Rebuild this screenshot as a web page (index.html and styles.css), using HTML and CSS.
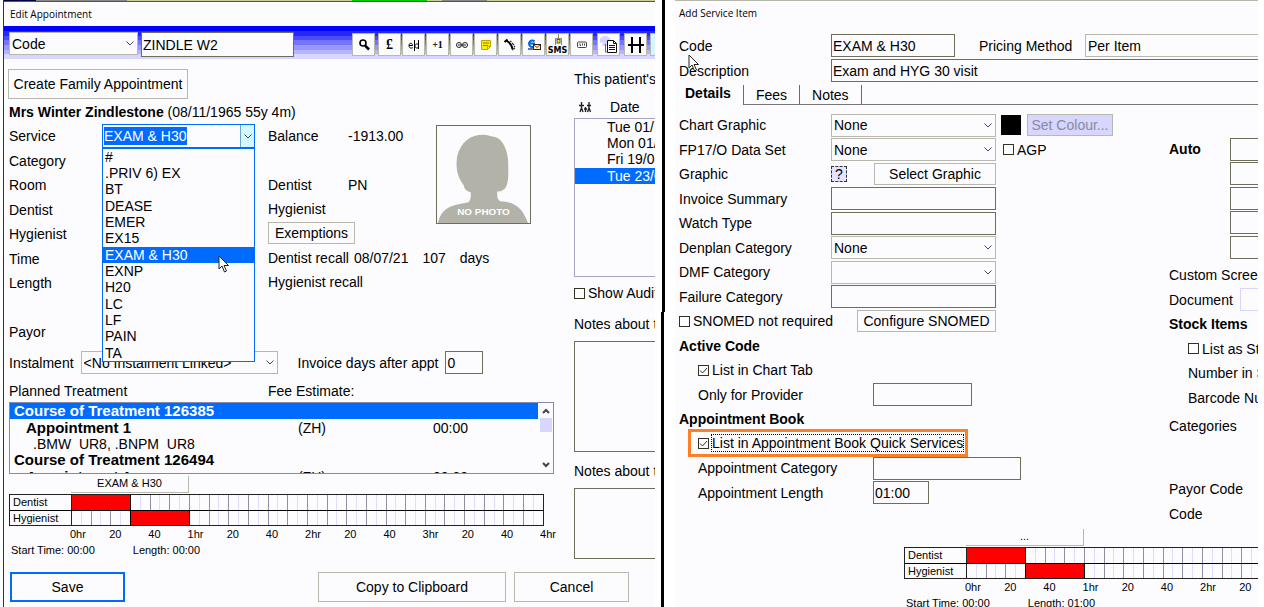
FILE: index.html
```html
<!DOCTYPE html>
<html lang="en">
<head>
    <meta charset="UTF-8">
    <meta name="viewport" content="width=device-width, initial-scale=1.0">
    <title>Edit Appointment</title>
    <link rel="stylesheet" href="styles.css">
</head>
<body>
    <main class="screens">
        <!-- Edit Appointment -->
        <section class="pane appointment">
            <div class="book-strip"></div>
            <h1 class="title">Edit Appointment</h1>

            <div class="toolbar">
                <select class="field select search-by" aria-label="Search by"><option>Code</option></select>
                <input class="field search-text" type="text" value="ZINDLE W2" aria-label="Search text">
                <div class="tools">
                    <button class="tool" aria-label="Find"><svg viewBox="0 0 16 16"><circle cx="7" cy="6" r="3" fill="none" stroke="#000" stroke-width="1.600"/><path d="M9 8.500l4 4" stroke="#000" stroke-width="2.500"/></svg></button>
                    <button class="tool spaced pound">£</button>
                    <button class="tool" aria-label="Edit"><svg viewBox="0 0 16 16"><path d="M3 8.500h3.500c0-3-3.500-3-3.500 0s2.500 3 4 2M8.500 3v11M12.500 3v9M12.500 8c-1-2-3.500-1-3.500 1s2.500 3 3.500 1" fill="none" stroke="#000"/></svg></button>
                    <button class="tool plus-one">+1</button>
                    <button class="tool" aria-label="Link"><svg viewBox="0 0 16 16"><path d="M5 5.500a2.500 2.500 0 1 0 0 5 2.500 2.500 0 1 0 0-5M11 5.500a2.500 2.500 0 1 0 0 5 2.500 2.500 0 1 0 0-5" fill="none" stroke="#222"/><path d="M4 8h3M9 8h3" stroke="#222"/></svg></button>
                    <button class="tool" aria-label="Note"><svg viewBox="0 0 16 16"><path d="M3.500 3.500h9v6l-3 3h-6z" fill="#ffee00" stroke="#b8a800"/><path d="M5 6h6M5 8.500h5" stroke="#8a7d00"/><path d="M9.500 12.500v-3h3z" fill="#fff8a0" stroke="#b8a800"/></svg></button>
                    <button class="tool" aria-label="Phone"><svg viewBox="0 0 16 16"><path d="M2.500 5l3-2.500M5 4c3 2 5 5 5.500 8" fill="none" stroke="#000" stroke-width="2"/><path d="M10 13l3-2M8 4l1.500 1M10 6l2 2M12 9l1 1" stroke="#333" stroke-width="1.200"/></svg></button>
                    <button class="tool" aria-label="Email"><svg viewBox="0 0 16 16"><path d="M8.500 4.500A3.200 3.200 0 1 0 8.500 9M3 6.500h6" fill="none" stroke="#0066dd" stroke-width="2"/><rect x="7.500" y="7.500" width="7" height="5" fill="#ffe9a0" stroke="#222"/><path d="M8 8l3 2.500L14 8" fill="none" stroke="#b33"/><path d="M2 12h6" stroke="#2244aa" stroke-width="1.500"/></svg></button>
                    <button class="tool sms"><svg viewBox="0 0 16 12"><path d="M5.500 11V4.500h6V11M8.500 4V0" fill="none" stroke="#8a8a6a"/><rect x="7" y="5.500" width="3" height="3.500" fill="#ffee00" stroke="#555"/></svg><span>SMS</span></button>
                    <button class="tool" aria-label="Card"><svg viewBox="0 0 16 16"><rect x="3.500" y="5" width="9" height="5.500" rx="1" fill="#fff" stroke="#444"/><path d="M6 6.500v2h1M8.500 6.500v2M10.500 6.500v2" fill="none" stroke="#444"/></svg></button>
                    <button class="tool wide" aria-label="New document"><svg viewBox="0 0 20 20"><path d="M1 5h10M6 1v10" stroke="#d4d4ff" stroke-width="5"/><path d="M8.500 5.500h6l3 3v9h-9z" fill="#fff" stroke="#111"/><path d="M14.500 5.500v3h3M10 10.500h6M10 12.500h6M10 14.500h6" fill="none" stroke="#111"/><path d="M6.500 9v8h2" fill="none" stroke="#666"/></svg></button>
                    <button class="tool wide" aria-label="Chart"><svg viewBox="0 0 20 20"><path d="M6 2v16M14 2v16M2 10h16" stroke="#000" stroke-width="2"/></svg></button>
                    <button class="tool spaced clipped" aria-label="More"></button>
                </div>
            </div>

            <div class="appointment-body">
                <div class="main-column">
                    <button class="button family">Create Family Appointment</button>
                    <p class="patient"><b>Mrs Winter Zindlestone</b> (08/11/1965 55y 4m)</p>

                    <div class="details">
                        <div class="rows">
                            <label for="service">Service</label>
                            <span>Category</span>
                            <span>Room</span>
                            <span>Dentist</span>
                            <span>Hygienist</span>
                            <span>Time</span>
                            <span>Length</span>
                            <span></span>
                            <span>Payor</span>
                        </div>
                        <div class="combo">
                            <div class="combo-box">
                                <input id="service" type="text" value="EXAM &amp; H30">
                                <button class="combo-arrow" aria-label="Show services"></button>
                            </div>
                            <ul class="combo-list">
                                <li>#</li>
                                <li>.PRIV 6) EX</li>
                                <li>BT</li>
                                <li>DEASE</li>
                                <li>EMER</li>
                                <li>EX15</li>
                                <li class="selected">EXAM &amp; H30
                                    <svg class="cursor" viewBox="0 0 12 18"><path d="M1 1v13l3-3 2.500 6 2-1-2.500-5.500h4.500z" fill="#fff" stroke="#222"/></svg>
                                </li>
                                <li>EXNP</li>
                                <li>H20</li>
                                <li>LC</li>
                                <li>LF</li>
                                <li>PAIN</li>
                                <li>TA</li>
                            </ul>
                        </div>
                        <div class="rows account">
                            <div class="pair"><span>Balance</span><span>-1913.00</span></div>
                            <span></span>
                            <div class="pair"><span>Dentist</span><span>PN</span></div>
                            <span>Hygienist</span>
                            <div><button class="button small">Exemptions</button></div>
                            <div class="recall"><span>Dentist recall</span><span>08/07/21</span><span>107</span><span>days</span></div>
                            <span>Hygienist recall</span>
                        </div>
                        <div class="photo">
                            <svg viewBox="0 0 94 98">
                                <path d="M1 98C5 80 18 80 32 77Q35 74 34 67Q28 66 27 60C21 52 19 44 20 34C22 18 33 9 44 9C50 8 54 11 59 11C68 14 72 27 72 38C72 46 73 57 69 63Q65 67 61 66Q60 74 64 76C79 77 86 82 92 98z" fill="#b2b2a8"/>
                                <text x="47" y="90" text-anchor="middle">NO PHOTO</text>
                            </svg>
                        </div>
                    </div>

                    <div class="instalment">
                        <label for="instalment">Instalment</label>
                        <select class="field select" id="instalment"><option>&lt;No Instalment Linked&gt;</option></select>
                        <label for="invoice-days">Invoice days after appt</label>
                        <input class="field days" id="invoice-days" type="text" value="0">
                    </div>

                    <div class="treatment-head"><span>Planned Treatment</span><span>Fee Estimate:</span></div>
                    <div class="treatment">
                        <table>
                            <colgroup>
                                <col class="col-name">
                                <col class="col-provider">
                                <col>
                            </colgroup>
                            <tr class="selected"><th colspan="3">Course of Treatment 126385</th></tr>
                            <tr><th class="level-1">Appointment 1</th><td>(ZH)</td><td>00:00</td></tr>
                            <tr><td class="level-2" colspan="3">.BMW&nbsp; UR8, .BNPM&nbsp; UR8</td></tr>
                            <tr><th colspan="3">Course of Treatment 126494</th></tr>
                            <tr><th class="level-1">Appointment 1</th><td>(ZH)</td><td>00:00</td></tr>
                        </table>
                        <div class="scrollbar">
                            <svg viewBox="0 0 8 6"><path d="M1 5l3-3 3 3" fill="none" stroke="#444" stroke-width="2"/></svg>
                            <div class="thumb"></div>
                            <svg viewBox="0 0 8 6"><path d="M1 1l3 3 3-3" fill="none" stroke="#444" stroke-width="2"/></svg>
                        </div>
                    </div>

                    <div class="timeline" data-caption="EXAM &amp; H30" data-length="00:00"></div>
                </div>

                <div class="side-column">
                    <p class="side-title">This patient's appointments</p>
                    <div class="date-head">
                        <svg viewBox="0 0 12 12"><path d="M2.500 1v6M0 4.500h5M1 11l1.500-4 1.500 4M6.500 6v5M5 8h3M10 1v6M8 4.500h4M8.500 11L10 7l1.500 4" fill="none" stroke="#222" stroke-width="1.400"/></svg>
                        <span>Date</span>
                    </div>
                    <ul class="dates">
                        <li>Tue 01/12/20</li>
                        <li>Mon 01/02/21</li>
                        <li>Fri 19/03/21</li>
                        <li class="selected">Tue 23/03/21</li>
                    </ul>
                    <label class="check audit"><input type="checkbox">Show Audit</label>
                    <label class="notes-label" for="notes-patient">Notes about the patient</label>
                    <textarea class="notes tall" id="notes-patient"></textarea>
                    <label class="notes-label" for="notes-appointment">Notes about this visit</label>
                    <textarea class="notes" id="notes-appointment"></textarea>
                </div>
            </div>

            <div class="actions">
                <button class="button save">Save</button>
                <button class="button copy">Copy to Clipboard</button>
                <button class="button cancel">Cancel</button>
            </div>
        </section>

        <div class="divider"></div>

        <!-- Add Service Item -->
        <section class="pane service">
            <h1 class="title">Add Service Item</h1>

            <div class="item-head">
                <label for="code">Code</label>
                <input class="field" id="code" type="text" value="EXAM &amp; H30">
                <label for="pricing">Pricing Method</label>
                <select class="field pricing" id="pricing"><option>Per Item</option></select>
                <label for="description">Description
                    <svg class="cursor" viewBox="0 0 12 18"><path d="M1 1v13l3-3 2.500 6 2-1-2.500-5.500h4.500z" fill="#fff" stroke="#222"/></svg>
                </label>
                <input class="field description" id="description" type="text" value="Exam and HYG 30 visit">
            </div>

            <nav class="tabs">
                <a class="tab active" href="#details">Details</a>
                <a class="tab" href="#fees">Fees</a>
                <a class="tab" href="#notes">Notes</a>
                <span class="tab-fill"></span>
            </nav>

            <div class="item-body">
                <div class="rows item-rows">
                    <div class="row">
                        <label for="chart-graphic">Chart Graphic</label>
                        <select class="field select" id="chart-graphic"><option>None</option></select>
                        <span class="swatch"></span>
                        <button class="button small" disabled>Set Colour...</button>
                    </div>
                    <div class="row">
                        <label for="data-set">FP17/O Data Set</label>
                        <select class="field select" id="data-set"><option>None</option></select>
                        <label class="check agp"><input type="checkbox">AGP</label>
                    </div>
                    <div class="row">
                        <span>Graphic</span>
                        <div class="graphic">
                            <span class="placeholder">?</span>
                            <button class="button small">Select Graphic</button>
                        </div>
                    </div>
                    <div class="row"><label for="summary">Invoice Summary</label><input class="field" id="summary" type="text"></div>
                    <div class="row"><label for="watch">Watch Type</label><input class="field" id="watch" type="text"></div>
                    <div class="row"><label for="denplan">Denplan Category</label><select class="field select" id="denplan"><option>None</option></select></div>
                    <div class="row"><label for="dmf">DMF Category</label><select class="field select" id="dmf"><option></option></select></div>
                    <div class="row"><label for="failure">Failure Category</label><input class="field" id="failure" type="text"></div>
                    <div class="snomed">
                        <label class="check"><input type="checkbox">SNOMED not required</label>
                        <button class="button small">Configure SNOMED</button>
                    </div>
                    <h2>Active Code</h2>
                    <label class="check indent"><input type="checkbox" checked>List in Chart Tab</label>
                    <div class="row indent"><label for="provider">Only for Provider</label><input class="field provider" id="provider" type="text"></div>
                    <h2>Appointment Book</h2>
                    <div class="indent">
                        <label class="check highlight"><input type="checkbox" checked><span>List in Appointment Book Quick Services</span></label>
                    </div>
                    <div class="row indent"><label for="category">Appointment Category</label><input class="field category" id="category" type="text"></div>
                    <div class="row indent"><label for="length">Appointment Length</label><input class="field length" id="length" type="text" value="01:00"></div>
                </div>

                <div class="stock-column">
                    <div class="rows auto">
                        <div class="auto-row"><b>Auto</b><input class="field" type="text" aria-label="Auto 1"></div>
                        <div class="auto-row"><input class="field" type="text" aria-label="Auto 2"></div>
                        <div class="auto-row"><input class="field" type="text" aria-label="Auto 3"></div>
                        <div class="auto-row"><input class="field" type="text" aria-label="Auto 4"></div>
                        <div class="auto-row"><input class="field" type="text" aria-label="Auto 5"></div>
                    </div>
                    <div class="rows">
                        <span>Custom Screen</span>
                        <div class="document"><label for="document">Document</label><input class="field" id="document" type="text" disabled></div>
                        <h2>Stock Items</h2>
                        <label class="check indent"><input type="checkbox">List as Stock</label>
                        <span class="indent">Number in Stock</span>
                        <span class="indent">Barcode Number</span>
                    </div>
                    <div class="rows categories"><span>Categories</span></div>
                    <div class="rows payor">
                        <span>Payor Code</span>
                        <span>Code</span>
                    </div>
                </div>
            </div>

            <div class="timeline item-timeline" data-caption="..." data-length="01:00"></div>
        </section>
    </main>

    <script>
        const HOURS = 4;
        const SLOTS = HOURS * 12; // one slot is five minutes

        // Slots between from and to are booked
        function renderTrack(name, from, to) {
            let slots = '';
            for (let i = 0; i < SLOTS; i++) {
                const classes = ['slot'];
                if (i % 2 === 1) classes.push('ten');
                if (i >= from && i < to) classes.push('booked');
                if (i === from - 1 || i === to - 1) classes.push('edge');
                slots += `<span class="${classes.join(' ')}"></span>`;
            }
            return `<div class="track"><span class="track-name">${name}</span><div class="slots">${slots}</div></div>`;
        }

        function renderScale() {
            let marks = '';
            for (let hour = 0; hour < HOURS; hour++) {
                marks += `<span>${hour}hr</span><span>20</span><span>40</span>`;
            }
            return `<div class="scale">${marks}<span class="last">${HOURS}hr</span></div>`;
        }

        document.querySelectorAll('.timeline').forEach(timeline => {
            timeline.innerHTML = `
                <div class="caption">${timeline.dataset.caption.replace('&', '&amp;')}</div>
                <div class="tracks">
                    ${renderTrack('Dentist', 0, 6)}
                    ${renderTrack('Hygienist', 6, 12)}
                </div>
                ${renderScale()}
                <div class="times"><span>Start Time: 00:00</span><span>Length: ${timeline.dataset.length}</span></div>
            `;
        });
    </script>
</body>
</html>
```
FILE: styles.css
```css
:root {
    --window: #fcfcff;
    --text: #000;
    --accent: #006cff;
    --field-border: #6e6e5a;
    --soft-border: #b8b8ac;
    --lilac: #d6d6ff;
    --highlight: #ff7f27;
}

* {
    margin: 0;
    padding: 0;
    box-sizing: border-box;
}

body {
    background-color: #fff;
    color: var(--text);
    font-family: "Liberation Sans", Arial, sans-serif;
    font-size: 14px;
    line-height: 16px;
    white-space: nowrap;
    overflow: hidden;
}

input, select, button, textarea {
    font: inherit;
    color: inherit;
    border-radius: 0;
}

ul {
    list-style: none;
}

h2 {
    font-size: 14px;
}

svg {
    display: block;
}

.screens {
    display: grid;
    grid-template-columns: minmax(0, 655fr) 20px minmax(0, 583fr);
    padding-right: 6px;
    min-height: 100vh;
}

.pane {
    background-color: var(--window);
    overflow: hidden;
}

.title {
    font-family: "Open Sans", "Noto Sans", sans-serif;
    font-size: 10px;
    font-weight: 400;
    line-height: 24px;
}

/* Shared controls */
.field {
    height: 23px;
    min-width: 0;
    padding: 0 1px;
    background-color: var(--window);
    border: 1px solid var(--field-border);
}

.field.select, .field.pricing {
    appearance: none;
    padding: 0 2px;
    border-color: var(--soft-border);
}

.field.select {
    background-image: url("data:image/svg+xml,%3Csvg xmlns='http://www.w3.org/2000/svg' width='8' height='5'%3E%3Cpath d='M.5.500l3.500 3.500L7.500.500' fill='none' stroke='%23446'/%3E%3C/svg%3E");
    background-repeat: no-repeat;
    background-position: right 3px center;
}

.button {
    height: 30px;
    background-color: var(--window);
    border: 1px solid var(--soft-border);
}

.button.small {
    height: 22px;
}

.button:disabled {
    background-color: var(--lilac);
    color: #8a8a9c;
}

.check {
    display: flex;
    align-items: center;
    gap: 3px;
}

.check input {
    appearance: none;
    width: 11px;
    height: 11px;
    background-color: var(--window);
    border: 1px solid #333322;
}

.check input:checked {
    background-image: url("data:image/svg+xml,%3Csvg xmlns='http://www.w3.org/2000/svg' width='9' height='9'%3E%3Cpath d='M1 4.500l2.500 2.500L8 2' fill='none' stroke='%23333'/%3E%3C/svg%3E");
}

.rows {
    display: grid;
    grid-auto-rows: 24px 25px;
    align-items: center;
}

.selected {
    background-color: var(--accent);
    color: #fff;
}

.cursor {
    position: absolute;
    width: 12px;
    height: 18px;
}

.divider {
    display: grid;
    grid-template-rows: 310fr 297fr;
}

.divider::before, .divider::after {
    content: "";
    width: 3px;
    margin-left: 7px;
    background-color: #000;
}

.divider::after {
    margin-left: 6px;
}

/* Edit Appointment */
.appointment {
    margin-left: 3px;
    border-left: 1px solid #333;
}

.appointment .title {
    padding-left: 6px;
}

.book-strip {
    height: 2px;
    border-bottom: 1px solid #555;
    background: linear-gradient(90deg, #000044 32px, #888 32px 123px, #cccc99 123px 348px, #00cc00 348px 423px, #cccc99 423px 438px, #888 438px 483px, #cccc99 483px);
}

.toolbar {
    display: flex;
    align-items: flex-start;
    height: 33px;
    padding: 6px 0 0 5px;
    background: linear-gradient(#0000ff 5px, #2626ff 5px 10px, #4c4cff 10px 14px, #7474ff 14px 19px, #9898ff 19px 24px, #b4b4ff 24px 28px, #d6d6ff 28px);
}

.toolbar > * {
    flex: none;
}

.search-by {
    width: 129px;
}

.search-text {
    width: 153px;
    height: 25px;
    margin-left: 3px;
}

.tools {
    display: flex;
    gap: 1px;
    margin-left: 58px;
    padding-top: 1px;
}

.tool {
    display: flex;
    flex: none;
    flex-direction: column;
    align-items: center;
    justify-content: center;
    width: 23px;
    height: 23px;
    background-color: var(--window);
    border: 1px solid var(--soft-border);
}

.tool svg {
    width: 16px;
    height: 16px;
}

.tool.spaced {
    margin-left: 2px;
}

.tool.wide {
    margin-left: 3px;
}

.tool.wide svg {
    width: 20px;
    height: 20px;
}

.tool.clipped {
    background-color: #d4f4ff;
}

.pound {
    font: bold 14px "Liberation Serif", serif;
}

.plus-one {
    font: bold 10px "Liberation Serif", serif;
}

.sms {
    font: bold 8px "DejaVu Sans", sans-serif;
}

.sms svg {
    height: 12px;
}

.appointment-body {
    display: grid;
    grid-template-columns: minmax(0, 1fr) 81px;
    gap: 20px;
    padding-left: 5px;
}

.main-column {
    padding-top: 10px;
}

.family {
    display: block;
    width: 180px;
    margin-left: -1px;
}

.patient {
    padding: 5px 0 4px;
}

.details {
    display: flex;
    align-items: flex-start;
}

.details > * {
    flex: none;
}

.details > .rows:first-child {
    width: 93px;
}

.combo {
    position: relative;
    z-index: 1;
    width: 153px;
    margin-right: 13px;
}

.combo-box {
    display: flex;
    align-items: center;
    height: 24px;
    border: 1px solid var(--accent);
    background-color: var(--window);
}

.combo-box input {
    width: 83px;
    height: 18px;
    margin-left: 1px;
    border: 0;
    background-color: var(--accent);
    color: #fff;
}

.combo-arrow {
    width: 14px;
    height: 22px;
    margin-left: auto;
    border: 0;
    border-left: 1px solid #66aacc;
    background: #d4f8ff url("data:image/svg+xml,%3Csvg xmlns='http://www.w3.org/2000/svg' width='8' height='5'%3E%3Cpath d='M.5.500l3.500 3.500L7.500.500' fill='none' stroke='%23446'/%3E%3C/svg%3E") no-repeat center;
}

.combo-list {
    position: absolute;
    top: 24px;
    left: 0;
    right: 0;
    display: grid;
    grid-auto-rows: 16px 16px 17px;
    border: 1px solid var(--accent);
    background-color: var(--window);
}

.combo-list li {
    position: relative;
    padding-left: 2px;
}

.combo-list .cursor {
    top: 8px;
    right: 24px;
}

/* The recall line is wider than the column and runs on below the photo */
.rows.account {
    grid-auto-rows: 24px 24px 25px;
    grid-template-columns: minmax(0, 1fr);
    width: 140px;
}

.account .button {
    width: 87px;
}

.pair {
    display: grid;
    grid-template-columns: 80px auto;
}

.recall {
    display: flex;
    gap: 5px;
}

.recall span:nth-child(n + 3) {
    margin-left: 9px;
}

.photo {
    width: 95px;
    margin: 1px 23px 0 auto;
    border: 1px solid var(--field-border);
}

.photo text {
    fill: #fff;
    font-size: 10px;
    font-weight: bold;
}

.instalment {
    display: flex;
    align-items: center;
    padding-top: 7px;
}

.instalment .select {
    width: 197px;
    margin: 0 20px 0 7px;
}

.instalment .days {
    width: 38px;
    margin-left: 7px;
}

.treatment-head {
    display: grid;
    grid-template-columns: 259px auto;
    padding: 9px 0 3px;
}

.treatment {
    display: flex;
    height: 72px;
    overflow: hidden;
    border: 1px solid #8888aa;
}

.treatment table {
    flex: 1;
    width: 100%;
    min-width: 0;
    height: 82px;
    border-collapse: collapse;
    table-layout: fixed;
}

.col-name {
    width: 288px;
}

.col-provider {
    width: 135px;
}

.treatment th, .treatment td {
    height: 16px;
    text-align: left;
}

.treatment th {
    padding-left: 4px;
    font-size: 15px;
    line-height: 16px;
}

.treatment .level-1 {
    padding-left: 16px;
}

.treatment .level-2 {
    padding-left: 23px;
}

.scrollbar {
    display: flex;
    flex: none;
    flex-direction: column;
    align-items: center;
    width: 15px;
    padding: 5px 0;
}

.scrollbar svg {
    width: 8px;
    height: 6px;
}

.thumb {
    width: 12px;
    height: 14px;
    margin: 4px 0 auto;
    background-color: var(--lilac);
}

/* Timeline */
.timeline {
    width: 535px;
    font-size: 11px;
    line-height: 14px;
}

.caption {
    width: 118px;
    height: 17px;
    margin: 2px 0 1px 62px;
    border: solid var(--soft-border);
    border-width: 0 1px 1px 0;
    text-align: center;
}

.tracks {
    border: 1px solid #222;
}

.track {
    display: flex;
    height: 15px;
}

.track + .track {
    border-top: 1px solid #000;
}

.track-name {
    width: 62px;
    padding-left: 3px;
    border-right: 1px solid #222;
}

.slots {
    display: flex;
    flex: 1;
}

.slot {
    flex: 1;
    border-right: 1px solid #dcdcff;
}

.slot.ten {
    border-color: #9090a4;
}

.slot.booked {
    background-color: #ff0000;
    border-color: #ff0000;
}

.slot.edge {
    border-color: #000;
}

.slot:last-child {
    border-right: 0;
}

.scale {
    display: flex;
    padding: 1px 4px 2px 61px;
}

.scale span {
    flex: 1 0 0;
    min-width: 0;
}

.scale .last {
    flex: 0 0 0;
}

.times {
    display: flex;
    gap: 38px;
    padding-left: 2px;
}

/* Side column */
.side-column {
    display: flex;
    flex-direction: column;
    min-width: 0;
    padding-top: 12px;
    overflow: hidden;
}

.side-column > * {
    width: 140px;
}

.date-head {
    display: flex;
    align-items: center;
    gap: 19px;
    padding: 12px 0 3px 5px;
}

.date-head svg {
    width: 12px;
    height: 12px;
}

.dates {
    height: 159px;
    display: grid;
    grid-auto-rows: 16px 16px 17px;
    align-content: start;
    border: 1px solid #a4a4c4;
}

.dates li {
    padding-left: 32px;
}

.audit {
    padding-top: 8px;
}

.notes-label {
    padding: 15px 0 9px;
}

.notes {
    flex: none;
    height: 71px;
    background-color: var(--window);
    border: 1px solid var(--field-border);
    resize: none;
}

.notes.tall {
    height: 111px;
}

.notes.tall + .notes-label {
    padding: 11px 0 9px;
}

.actions {
    display: flex;
    padding: 13px 26px 3px 6px;
}

.save {
    width: 115px;
    border: 2px solid var(--accent);
}

.copy {
    width: 188px;
    margin-left: auto;
}

.cancel {
    width: 115px;
    margin-left: 8px;
}

/* Add Service Item */
.service {
    border-top: 1px solid var(--soft-border);
    padding-left: 4px;
}

.item-head {
    display: grid;
    grid-template-columns: 152px 124px 106px minmax(0, 1fr);
    grid-auto-rows: 23px;
    row-gap: 2px;
    align-items: center;
    padding-top: 9px;
}

.item-head label {
    position: relative;
}

.item-head label:nth-of-type(2) {
    padding-left: 24px;
    margin-right: -24px;
}

.item-head .pricing {
    margin-left: 24px;
    margin-right: -2px;
}

.item-head .description {
    grid-column: 2 / -1;
    margin-right: -2px;
}

.item-head .cursor {
    top: -9px;
    left: 9px;
}

.tabs {
    display: flex;
    height: 23px;
    padding-top: 3px;
}

.tab {
    color: inherit;
    text-decoration: none;
    padding: 2px 12px 0;
    border-right: 1px solid var(--field-border);
    border-bottom: 1px solid #777;
}

.tab.active {
    padding: 0 12px 0 6px;
    border-bottom: 0;
    font-weight: bold;
}

.tab-fill {
    flex: 1;
    border-bottom: 1px solid #777;
}

.item-body {
    display: grid;
    grid-template-columns: minmax(0, 490fr) minmax(0, 89fr);
    align-items: start;
    padding-top: 8px;
}

.row {
    display: grid;
    grid-template-columns: 152px 165px auto auto;
    justify-content: start;
    align-items: center;
}

.swatch {
    width: 20px;
    height: 20px;
    margin-left: 5px;
    background-color: #000;
}

.row > .button {
    width: 86px;
    margin-left: 6px;
}

.agp {
    margin-left: 7px;
}

.graphic {
    display: flex;
    align-items: center;
    justify-content: space-between;
}

.graphic .button {
    width: 122px;
}

.placeholder {
    width: 16px;
    border: 1px dashed #333;
    background-color: #e4e4ff;
    line-height: 14px;
    text-align: center;
}

.snomed {
    display: flex;
    justify-content: space-between;
    width: 317px;
}

.snomed .button {
    width: 139px;
}

.indent {
    margin-left: 19px;
}

.row.indent {
    grid-template-columns: 175px auto;
}

.provider {
    width: 99px;
}

.category {
    width: 148px;
}

.length {
    width: 56px;
}

.highlight {
    position: relative;
    display: inline-flex;
}

.highlight span {
    outline: 1px dotted #000;
}

.highlight::after {
    content: "";
    position: absolute;
    inset: -6px -5px -6px -10px;
    border: 3px solid var(--highlight);
}

.stock-column {
    display: flex;
    flex-direction: column;
    gap: 4px;
    overflow: hidden;
}

.auto {
    padding-top: 24px;
}

.auto-row {
    display: flex;
    align-items: center;
    justify-content: space-between;
}

.auto-row .field {
    width: 60px;
    margin: 0 -32px 0 auto;
}

.document {
    display: flex;
    align-items: center;
    gap: 7px;
}

.document .field {
    width: 60px;
    border-color: var(--lilac);
}

.payor {
    padding-top: 35px;
}

.item-timeline {
    margin: 3px 0 0 225px;
}
```
